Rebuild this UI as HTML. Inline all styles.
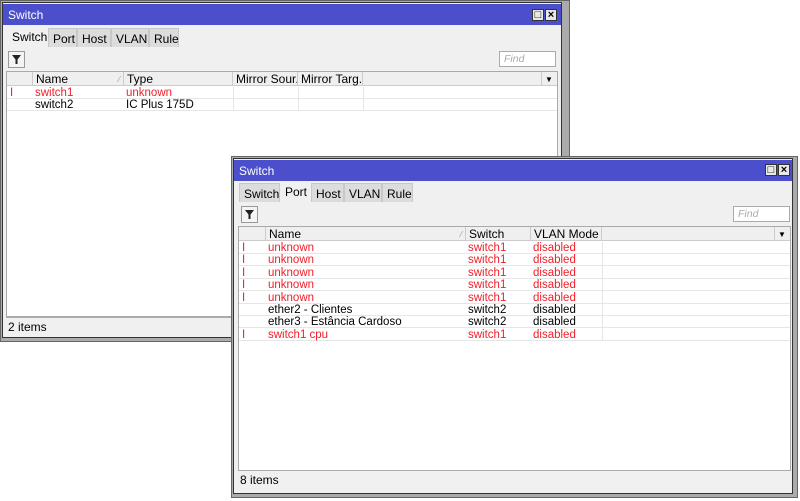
<!DOCTYPE html>
<html><head><style>
*{margin:0;padding:0;box-sizing:border-box}
body{width:800px;height:501px;background:#fff;position:relative;overflow:hidden;font-family:"Liberation Sans",sans-serif;font-size:11.5px;color:#000}
.a{position:absolute}
.frame{background:#ababab;border:1px solid #555}
.title{background:#4b4fcb;color:#fff;font-size:12px;padding:4px 0 0 5px}
.btn{width:12px;height:12px;background:#e8e8e8;border:1px solid #333;font-size:11px;line-height:10px;text-align:center;font-weight:bold}
.tab{top:0;height:19px;border:1px solid #c8c8c8;border-bottom:none;background:#dcdcdc;padding:3px 0 0 4px;font-size:12px}
.tab.on{background:#f0f0f0;border-color:#f0f0f0;top:-2px;height:21px}
.filt{width:17px;height:17px;border:1px solid #999;background:#f4f4f4}
.find{height:16px;border:1px solid #aaa;background:#fff;color:#aaa;font-style:italic;padding:1px 4px;font-size:10.5px}
.tbl{background:#fff;border:1px solid #aaa}
.hd{height:14px;background:#efefef;border-bottom:1px solid #ccc;top:0}
.hc{top:0;height:14px;border-right:1px solid #ccc;padding:0 3px;line-height:15px;white-space:nowrap;overflow:hidden;font-size:12px}
.row{height:12px;border-bottom:1px solid #e6e6e6;left:0;right:0;line-height:13px}
.row span{position:absolute;top:0;white-space:nowrap}
.red{color:#f0202a}
.status{border-top:1px solid #aaa;background:#f0f0f0;padding:2px 2px;font-size:12px}
</style></head><body>

<!-- Window 1 -->
<div class="a frame" style="left:0;top:0;width:570px;height:342px;border-color:#666"></div>
<div class="a" style="left:2px;top:2px;width:560px;height:336px;border:1px solid #333;background:#f0f0f0"></div>
<div class="a title" style="left:3px;top:4px;width:558px;height:21px">Switch</div>
<div class="a btn" style="left:532px;top:9px">□</div>
<div class="a btn" style="left:545px;top:9px">×</div>
<div class="a" style="left:7px;top:28px;width:550px;height:20px">
 <div class="a tab on" style="left:0;width:41px">Switch</div>
 <div class="a tab" style="left:41px;width:29px">Port</div>
 <div class="a tab" style="left:70px;width:34px">Host</div>
 <div class="a tab" style="left:104px;width:38px">VLAN</div>
 <div class="a tab" style="left:142px;width:30px">Rule</div>
</div>
<div class="a filt" style="left:8px;top:51px"><svg width="15" height="15" viewBox="0 0 15 15"><path d="M3 3h9L8.5 7.5V12H6.5V7.5Z" fill="#222"/></svg></div>
<div class="a find" style="left:499px;top:51px;width:57px">Find</div>
<div class="a tbl" style="left:6px;top:71px;width:552px;height:246px">
 <div class="a hd" style="left:0;width:550px"></div>
 <div class="a hc" style="left:0;width:26px"></div>
 <div class="a hc" style="left:26px;width:91px">Name<span style="position:absolute;right:3px;color:#999;font-size:8px">⁄</span></div>
 <div class="a hc" style="left:117px;width:109px">Type</div>
 <div class="a hc" style="left:226px;width:65px">Mirror Sour...</div>
 <div class="a hc" style="left:291px;width:65px">Mirror Targ...</div>
 <div class="a hc" style="left:534px;width:16px;border-left:1px solid #ccc;border-right:none;font-size:8px;padding:0 3px">▼</div>
 <div class="a row red" style="top:15px"><span style="left:3px">I</span><span style="left:28px">switch1</span><span style="left:119px">unknown</span></div>
 <div class="a row" style="top:27px"><span style="left:28px">switch2</span><span style="left:119px">IC Plus 175D</span></div>
 <div class="a" style="left:226px;top:15px;height:24px;border-left:1px solid #e6e6e6"></div>
 <div class="a" style="left:291px;top:15px;height:24px;border-left:1px solid #e6e6e6"></div>
 <div class="a" style="left:356px;top:15px;height:24px;border-left:1px solid #e6e6e6"></div>
</div>
<div class="a status" style="left:6px;top:317px;width:552px;height:18px">2 items</div>

<!-- Window 2 -->
<div class="a frame" style="left:231px;top:156px;width:567px;height:342px;border-color:#666"></div>
<div class="a" style="left:233px;top:158px;width:560px;height:336px;border:1px solid #333;background:#f0f0f0"></div>
<div class="a title" style="left:234px;top:160px;width:558px;height:21px">Switch</div>
<div class="a btn" style="left:765px;top:164px">□</div>
<div class="a btn" style="left:778px;top:164px">×</div>
<div class="a" style="left:239px;top:183px;width:550px;height:20px">
 <div class="a tab" style="left:0;width:41px">Switch</div>
 <div class="a tab on" style="left:41px;width:31px">Port</div>
 <div class="a tab" style="left:72px;width:33px">Host</div>
 <div class="a tab" style="left:105px;width:38px">VLAN</div>
 <div class="a tab" style="left:143px;width:31px">Rule</div>
</div>
<div class="a filt" style="left:241px;top:206px"><svg width="15" height="15" viewBox="0 0 15 15"><path d="M3 3h9L8.5 7.5V12H6.5V7.5Z" fill="#222"/></svg></div>
<div class="a find" style="left:733px;top:206px;width:57px">Find</div>
<div class="a tbl" style="left:238px;top:226px;width:553px;height:245px">
 <div class="a hd" style="left:0;width:551px"></div>
 <div class="a hc" style="left:0;width:27px"></div>
 <div class="a hc" style="left:27px;width:200px">Name<span style="position:absolute;right:3px;color:#999;font-size:8px">⁄</span></div>
 <div class="a hc" style="left:227px;width:65px">Switch</div>
 <div class="a hc" style="left:292px;width:71px">VLAN Mode</div>
 <div class="a hc" style="left:535px;width:16px;border-left:1px solid #ccc;border-right:none;font-size:8px;padding:0 3px">▼</div>
 <div class="a row red" style="top:15px"><span style="left:3px">I</span><span style="left:29px">unknown</span><span style="left:229px">switch1</span><span style="left:294px">disabled</span></div>
 <div class="a row red" style="top:27.4px"><span style="left:3px">I</span><span style="left:29px">unknown</span><span style="left:229px">switch1</span><span style="left:294px">disabled</span></div>
 <div class="a row red" style="top:39.8px"><span style="left:3px">I</span><span style="left:29px">unknown</span><span style="left:229px">switch1</span><span style="left:294px">disabled</span></div>
 <div class="a row red" style="top:52.2px"><span style="left:3px">I</span><span style="left:29px">unknown</span><span style="left:229px">switch1</span><span style="left:294px">disabled</span></div>
 <div class="a row red" style="top:64.6px"><span style="left:3px">I</span><span style="left:29px">unknown</span><span style="left:229px">switch1</span><span style="left:294px">disabled</span></div>
 <div class="a row" style="top:77px"><span style="left:29px">ether2 - Clientes</span><span style="left:229px">switch2</span><span style="left:294px">disabled</span></div>
 <div class="a row" style="top:89.4px"><span style="left:29px">ether3 - Estância Cardoso</span><span style="left:229px">switch2</span><span style="left:294px">disabled</span></div>
 <div class="a row red" style="top:101.8px"><span style="left:3px">I</span><span style="left:29px">switch1 cpu</span><span style="left:229px">switch1</span><span style="left:294px">disabled</span></div>
 <div class="a" style="left:363px;top:15px;height:99px;border-left:1px solid #e6e6e6"></div>
</div>
<div class="a status" style="left:238px;top:470px;width:553px;height:18px">8 items</div>
</body></html>
